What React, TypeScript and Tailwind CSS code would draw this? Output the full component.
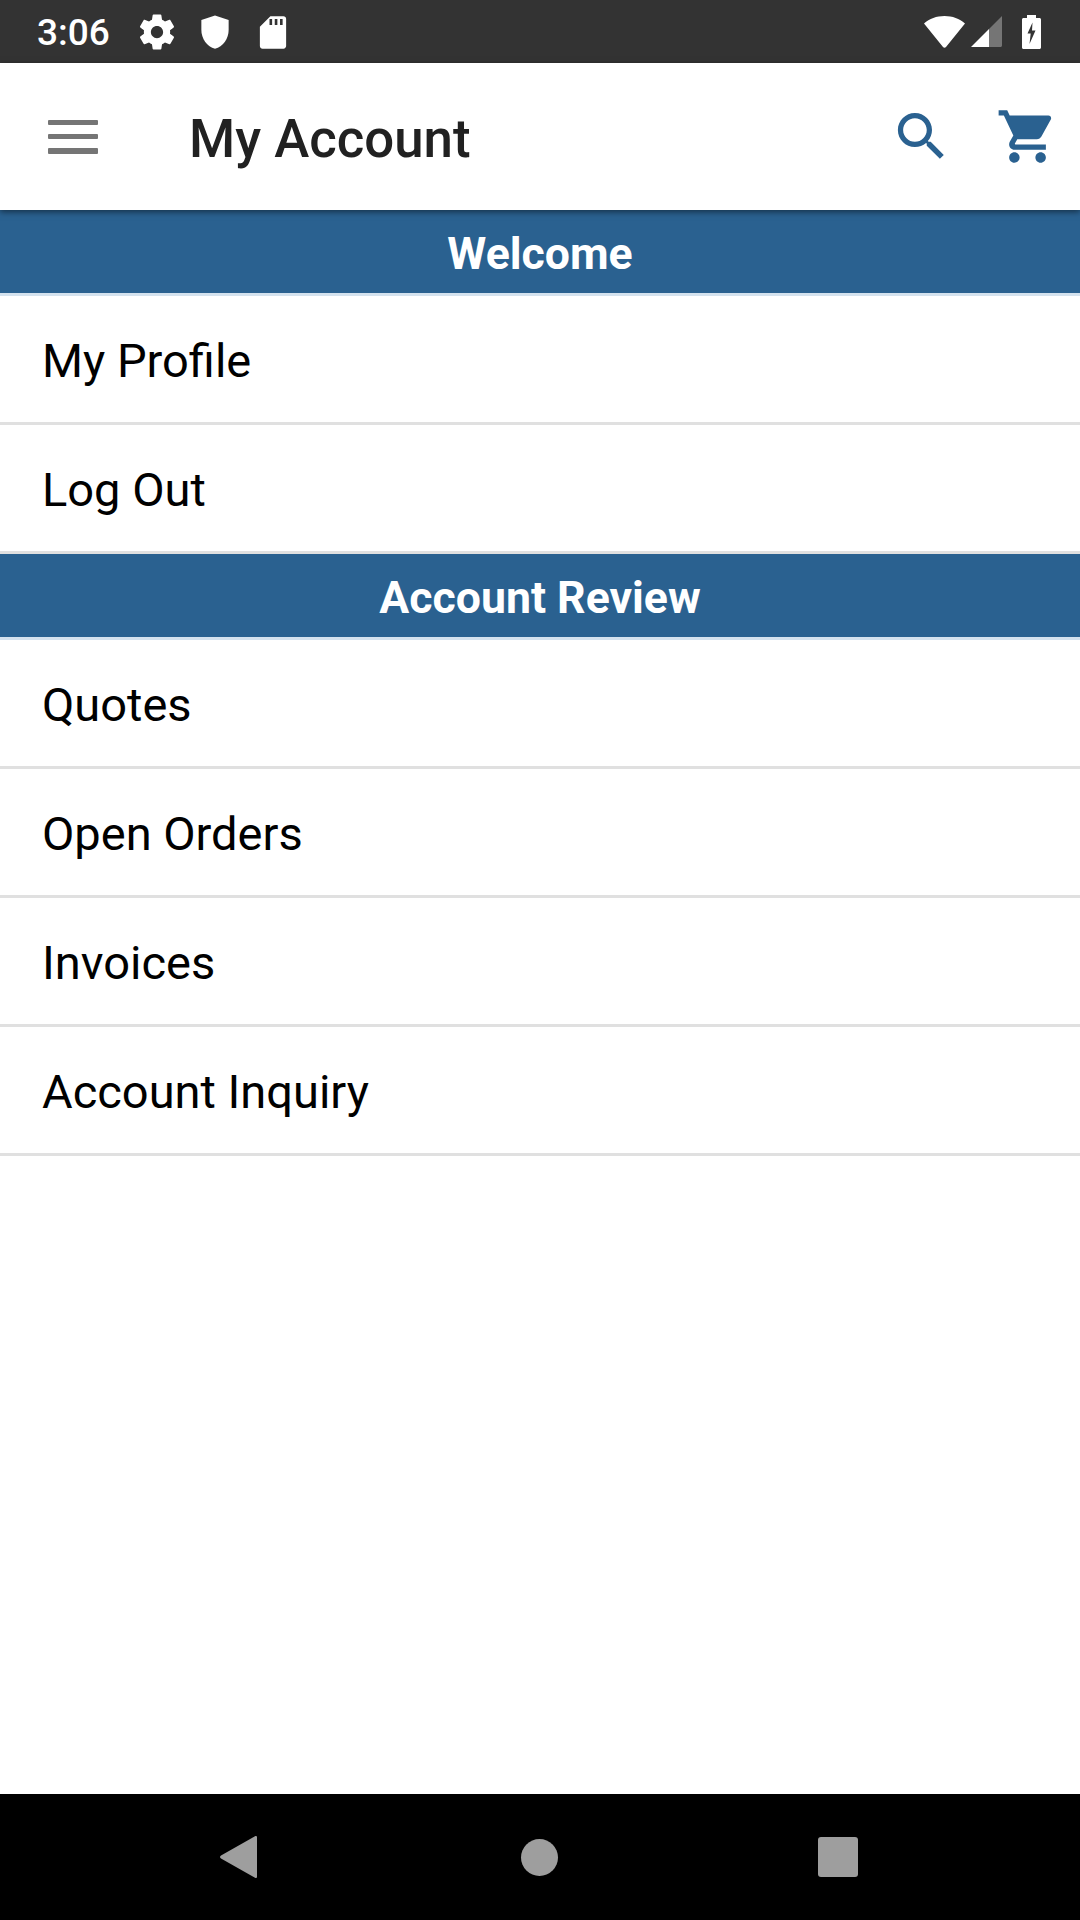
import React from 'react';

const FONT = "font-['Roboto','Noto_Sans',sans-serif]";

const Section: React.FC<{ title: string; items: string[] }> = ({ title, items }) => (
    <div>
        <div className="h-[83px] bg-[#2a6190] flex items-center justify-center pt-[5px] text-white text-[44.6px] font-bold">
            {title}
        </div>
        <div className="h-[3px] bg-[#d4e2ee]" />
        {items.map(item => (
            <div key={item} className="h-[129px] flex items-center pl-[42px] pt-[5px] text-black text-[47px] border-b-[3px] border-[#e0e0e0]">
                {item}
            </div>
        ))}
    </div>
);

export default function App() {
    return (
        <div className={`w-[1080px] h-[1920px] flex flex-col bg-white overflow-hidden ${FONT}`}>
            {/* status bar */}
            <div className="h-[63px] shrink-0 bg-[#333333] flex items-center text-white">
                <span className="ml-[37px] w-[73px] pt-[2px] text-[37px] font-medium leading-none">3:06</span>
                <svg className="ml-[26px]" width="42" height="42" viewBox="0 0 24 24" fill="#fff">
                    <path d="M19.43 12.98c.04-.32.07-.64.07-.98s-.03-.66-.07-.98l2.11-1.65c.19-.15.24-.42.12-.64l-2-3.46c-.12-.22-.39-.3-.61-.22l-2.49 1c-.52-.4-1.08-.73-1.69-.98l-.38-2.65C14.46 2.18 14.25 2 14 2h-4c-.25 0-.46.18-.49.42l-.38 2.65c-.61.25-1.17.59-1.69.98l-2.49-1c-.23-.09-.49 0-.61.22l-2 3.46c-.13.22-.07.49.12.64l2.11 1.65c-.04.32-.07.65-.07.98s.03.66.07.98l-2.11 1.65c-.19.15-.24.42-.12.64l2 3.46c.12.22.39.3.61.22l2.49-1c.52.4 1.08.73 1.69.98l.38 2.65c.03.24.24.42.49.42h4c.25 0 .46-.18.49-.42l.38-2.65c.61-.25 1.17-.59 1.69-.98l2.49 1c.23.09.49 0 .61-.22l2-3.46c.12-.22.07-.49-.12-.64l-2.11-1.65zM12 15.5c-1.93 0-3.5-1.57-3.5-3.5s1.57-3.5 3.5-3.5 3.5 1.57 3.5 3.5-1.57 3.5-3.5 3.5z" />
                </svg>
                <svg className="ml-[16px]" width="42" height="42" viewBox="0 0 24 24" fill="#fff">
                    <path d="M12 2.500 4.200 5.200v5.600c0 5 3.300 9.600 7.800 10.700 4.500-1.100 7.800-5.700 7.800-10.700V5.200z" />
                </svg>
                <svg className="ml-[16px]" width="42" height="42" viewBox="0 0 24 24" fill="#fff">
                    <path d="M18 3h-7.500L4.500 9v11c0 .9.7 1.500 1.500 1.500h12c.8 0 1.500-.7 1.500-1.500V4.500C19.500 3.700 18.800 3 18 3zM11.500 8H10V4.500h1.500zm3 0H13V4.500h1.500zm3 0H16V4.500h1.500z" />
                </svg>
                <div className="flex-1" />
                <svg width="41" height="32" viewBox="0 0 41 32" fill="#fff">
                    <path d="M20.500 0C12.500 0 5.500 2.700 0 7.500L19 31c.8 1 2.200 1 3 0L41 7.500C35.500 2.700 28.500 0 20.500 0z" />
                </svg>
                <svg className="ml-[6px]" width="31" height="31" viewBox="0 0 31 31">
                    <path d="M31 0 18 13v18h11.500c.8 0 1.500-.7 1.500-1.500z" fill="#757575" />
                    <path d="M18 13 0 31h18z" fill="#fff" />
                </svg>
                <svg className="ml-[20px] mr-[39px]" width="19" height="34" viewBox="0 0 19 34">
                    <path d="M5 0h9v3h3.500c.8 0 1.500.7 1.500 1.500v28c0 .8-.7 1.500-1.500 1.500h-16C.7 34 0 33.300 0 32.500v-28C0 3.700.7 3 1.500 3H5z" fill="#fff" />
                    <path d="M10.500 7.500 5.500 18.500h3.200L7.500 29l6-13.500h-3.500z" fill="#333" />
                </svg>
            </div>

            {/* toolbar */}
            <div className="relative z-10 h-[147px] shrink-0 bg-white flex items-center shadow-[0_2px_6px_rgba(0,0,0,0.5)]">
                <div className="ml-[48px] w-[50px] flex flex-col gap-[9px] mt-[1px]">
                    <div className="h-[5px] bg-[#757575] rounded-[1px]" />
                    <div className="h-[5px] bg-[#757575] rounded-[1px]" />
                    <div className="h-[6px] bg-[#757575] rounded-[1px]" />
                </div>
                <h1 className="ml-[91px] pt-[5px] text-[52.8px] font-medium text-[#212121] leading-none">My Account</h1>
                <div className="flex-1" />
                <svg width="63" height="63" viewBox="0 0 24 24" fill="#2a6190">
                    <path d="M15.500 14h-.79l-.28-.27C15.410 12.590 16 11.110 16 9.500 16 5.910 13.090 3 9.500 3S3 5.910 3 9.500 5.910 16 9.500 16c1.610 0 3.090-.59 4.230-1.570l.27.28v.79l5 4.990L20.490 19l-4.990-5zm-6 0C7.010 14 5 11.990 5 9.500S7.010 5 9.500 5 14 7.010 14 9.500 11.990 14 9.500 14z" />
                </svg>
                <svg className="ml-[43px] mr-[21px]" width="63" height="63" viewBox="0 0 24 24" fill="#2a6190">
                    <path d="M7 18c-1.100 0-1.990.9-1.990 2S5.900 22 7 22s2-.9 2-2-.9-2-2-2zM1 2v2h2l3.600 7.590-1.350 2.450c-.16.28-.25.61-.25.96 0 1.100.9 2 2 2h12v-2H7.420c-.14 0-.25-.11-.25-.25l.03-.12.9-1.630h7.450c.75 0 1.410-.41 1.750-1.030l3.580-6.480c.08-.14.12-.31.12-.48 0-.55-.45-1-1-1H5.210l-.94-2H1zm16 16c-1.100 0-1.990.9-1.990 2s.89 2 1.990 2 2-.9 2-2-.9-2-2-2z" />
                </svg>
            </div>

            {/* content */}
            <div className="flex-1">
                <Section title="Welcome" items={['My Profile', 'Log Out']} />
                <Section title="Account Review" items={['Quotes', 'Open Orders', 'Invoices', 'Account Inquiry']} />
            </div>

            {/* nav bar */}
            <div className="h-[126px] shrink-0 bg-black flex items-center">
                <svg className="ml-[220px]" width="37" height="42" viewBox="0 0 37 42" fill="#9e9e9e">
                    <path d="M35 .3c1-.7 2 0 2 1v39.400c0 1-1 1.700-2 1L1 22.500c-1.300-.8-1.300-2.200 0-3z" />
                </svg>
                <div className="ml-[264px] w-[37px] h-[37px] rounded-full bg-[#9e9e9e]" />
                <div className="ml-[260px] w-[40px] h-[40px] rounded-[3px] bg-[#9e9e9e]" />
            </div>
        </div>
    );
}
